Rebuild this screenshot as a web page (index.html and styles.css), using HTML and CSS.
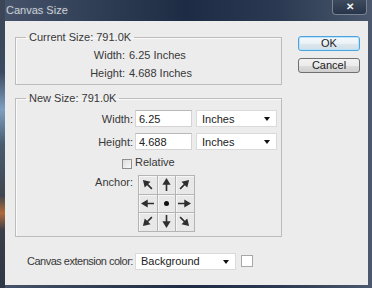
FILE: index.html
```html
<!DOCTYPE html>
<html lang="en">
<head>
  <meta charset="UTF-8">
  <meta name="viewport" content="width=device-width, initial-scale=1.0">
  <title>Canvas Size</title>
  <link rel="stylesheet" href="styles.css">
</head>
<body>
  <!-- arrow shape, reused in every anchor cell -->
  <svg class="defs" width="0" height="0">
    <symbol id="arrow" viewBox="0 0 12 12">
      <path d="M6 0 L9.8 6.2 H6.75 V12 H5.25 V6.2 H2.2 Z"/>
    </symbol>
  </svg>

  <div class="window">
    <div class="titlebar">
      <span class="title">Canvas Size</span>
      <span class="close">&#x2715;</span>
    </div>

    <div class="client">
      <div class="main">
        <fieldset class="group">
          <legend>Current Size: 791.0K</legend>
          <div class="info-grid">
            <span class="lbl">Width:</span><span>6.25 Inches</span>
            <span class="lbl">Height:</span><span>4.688 Inches</span>
          </div>
        </fieldset>

        <fieldset class="group group-new">
          <legend>New Size: 791.0K</legend>
          <div class="form-grid">
            <label class="lbl">Width:</label>
            <div class="field-row">
              <input class="num" type="text" value="6.25">
              <span class="select unit"><span>Inches</span></span>
            </div>

            <label class="lbl">Height:</label>
            <div class="field-row">
              <input class="num" type="text" value="4.688">
              <span class="select unit"><span>Inches</span></span>
            </div>

            <span class="lbl"><span class="checkbox"></span></span>
            <span class="check-text">Relative</span>

            <span class="lbl lbl-top">Anchor:</span>
            <div class="anchor">
              <span class="cell"><svg class="arr nw"><use href="#arrow"/></svg></span>
              <span class="cell"><svg class="arr n"><use href="#arrow"/></svg></span>
              <span class="cell"><svg class="arr ne"><use href="#arrow"/></svg></span>
              <span class="cell"><svg class="arr w"><use href="#arrow"/></svg></span>
              <span class="cell"><span class="dot"></span></span>
              <span class="cell"><svg class="arr e"><use href="#arrow"/></svg></span>
              <span class="cell"><svg class="arr sw"><use href="#arrow"/></svg></span>
              <span class="cell"><svg class="arr s"><use href="#arrow"/></svg></span>
              <span class="cell"><svg class="arr se"><use href="#arrow"/></svg></span>
            </div>
          </div>
        </fieldset>

        <div class="ext-row">
          <span class="ext-label">Canvas extension color:</span>
          <span class="select ext"><span>Background</span></span>
          <span class="swatch"></span>
        </div>
      </div>

      <div class="buttons">
        <button class="btn btn-ok">OK</button>
        <button class="btn">Cancel</button>
      </div>
    </div>
  </div>
</body>
</html>
```

FILE: styles.css
```css
body {
  margin: 0;
  font-family: 'Liberation Sans', Arial, sans-serif;
  font-size: 11px;
  color: #383838;
}
.defs {
  position: absolute;
  width: 0;
  height: 0;
}
/* Window frame */
.window {
  width: 372px;
  height: 288px;
  display: flex;
  flex-direction: column;
  background:
    linear-gradient(#3b4656 0%, #3b4a60 25%, #7f9fc0 38%, #4a5c70 50%, #40464f 68%, #b0693c 74%, #3a3f48 80%, #2f3846 100%) left top / 5px 100% no-repeat,
    linear-gradient(90deg, #46536a 0%, #2d3b52 30%, #1d2b44 50%, #2b3a52 75%, #4b586d 100%);
}
.titlebar {
  height: 21px;
  display: flex;
  justify-content: space-between;
  align-items: flex-start;
  padding-left: 6px;
}
.title {
  line-height: 20px;
  font-size: 11px;
  color: #c9ced6;
  text-shadow: 0 0 3px rgba(255, 255, 255, 0.15);
}
.close {
  width: 33px;
  height: 14px;
  margin-right: 5px;
  border: 1px solid #778292;
  border-top: none;
  border-radius: 0 0 4px 4px;
  background: linear-gradient(#3e4b5e, #27344a);
  color: #f2f2f2;
  text-align: center;
  font-size: 10px;
  font-weight: bold;
  line-height: 14px;
}
/* Dialog body */
.client {
  flex: 1;
  margin: 0 4px 3px 5px;
  padding: 10px 8px 0 10px;
  background-color: #ececec;
  display: flex;
  gap: 16px;
}
.main {
  width: 267px;
}
.group {
  margin: 0;
  padding: 0;
  min-width: 0;
  border: 1px solid #bcbcbc;
  box-shadow: inset 1px 1px 0 #fafafa;
}
.group legend {
  margin-left: 10px;
  padding: 0 3px;
  line-height: 13px;
}
.group-new {
  margin-top: 7px;
}
.lbl {
  text-align: right;
}
.info-grid {
  display: grid;
  grid-template-columns: 109px auto;
  column-gap: 4px;
  line-height: 18px;
  padding: 2px 0;
}
.form-grid {
  display: grid;
  grid-template-columns: 117px auto;
  column-gap: 2px;
  row-gap: 6px;
  align-items: center;
  padding: 5px 0 4px;
}
.field-row {
  display: flex;
  gap: 4px;
}
.num {
  box-sizing: border-box;
  width: 57px;
  height: 17px;
  margin: 0;
  padding: 0 3px;
  font: inherit;
  color: #222;
  border: 1px solid #d4d4d4;
  border-top-color: #b8b8b8;
  background-color: #fff;
  outline: none;
}
.select {
  box-sizing: border-box;
  position: relative;
  display: flex;
  align-items: center;
  height: 17px;
  padding-left: 5px;
  color: #222;
  border: 1px solid #dadada;
  background-color: #fff;
}
/* little black drop arrow */
.select::after {
  content: '';
  position: absolute;
  right: 6px;
  top: 6px;
  border-left: 3px solid transparent;
  border-right: 3px solid transparent;
  border-top: 4px solid #111;
}
.unit {
  width: 81px;
}
.checkbox {
  display: inline-block;
  box-sizing: border-box;
  width: 10px;
  height: 10px;
  margin-right: 1px;
  vertical-align: middle;
  border: 1px solid #8e8f8f;
  background: linear-gradient(135deg, #dcdcdc, #f8f8f8);
}
.check-text {
  line-height: 13px;
}
.lbl-top {
  align-self: start;
  line-height: 14px;
}
/* 3x3 anchor picker */
.anchor {
  margin-left: 3px;
  display: grid;
  grid-template-columns: repeat(3, 17.5px);
  grid-template-rows: repeat(3, 17.5px);
  gap: 1px;
  padding: 1px;
  width: max-content;
  background-color: #b4b4b4;
}
.cell {
  display: flex;
  align-items: center;
  justify-content: center;
  background-color: #e8e8e8;
  box-shadow: inset 1px 1px 0 #f6f6f6;
}
.arr {
  width: 13px;
  height: 13px;
  fill: #2e2e2e;
}
.ne { transform: rotate(45deg); }
.e { transform: rotate(90deg); }
.se { transform: rotate(135deg); }
.s { transform: rotate(180deg); }
.sw { transform: rotate(225deg); }
.w { transform: rotate(270deg); }
.nw { transform: rotate(315deg); }
.dot {
  width: 5px;
  height: 5px;
  border-radius: 50%;
  background-color: #111;
}
/* bottom row */
.ext-row {
  display: flex;
  align-items: center;
  margin-top: 16px;
  padding-left: 12px;
}
.ext-label {
  width: 108px;
  flex-shrink: 0;
  white-space: nowrap;
  letter-spacing: -0.5px;
}
.ext {
  width: 101px;
}
.swatch {
  box-sizing: border-box;
  width: 12px;
  height: 12px;
  margin-left: 5px;
  border: 1px solid #a8a8a8;
  background-color: #fff;
}
/* buttons */
.buttons {
  display: flex;
  flex-direction: column;
  gap: 7px;
  padding-top: 5px;
}
.btn {
  box-sizing: border-box;
  width: 62px;
  height: 15px;
  padding: 0;
  font: inherit;
  color: #222;
  line-height: 13px;
  border: 1px solid #707070;
  border-radius: 3px;
  background: linear-gradient(#f2f2f2 0%, #ebebeb 50%, #dddddd 51%, #cfcfcf 100%);
  cursor: pointer;
}
.btn-ok {
  border-color: #4da3dd;
  box-shadow: inset 0 0 0 1px #b8e3fa;
  background: linear-gradient(#f4f9fc 0%, #ebf2f6 50%, #dde8ee 51%, #d2dee6 100%);
}
```
